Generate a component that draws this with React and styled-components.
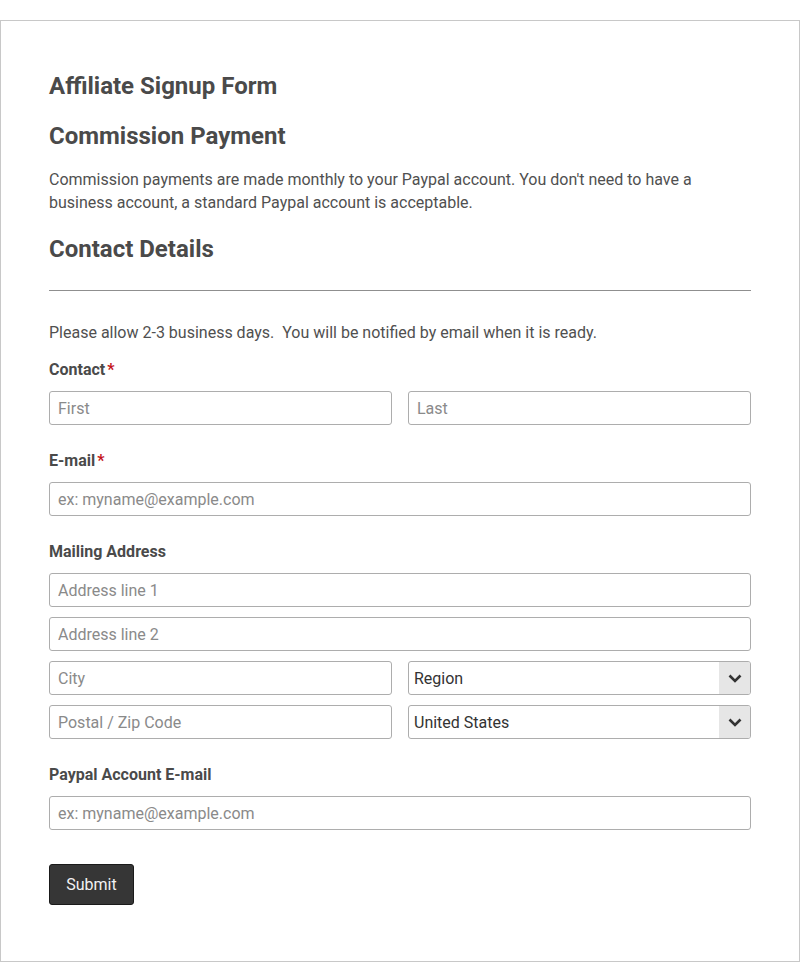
import styled, { createGlobalStyle } from 'styled-components';

const GlobalStyle = createGlobalStyle`
  body {
    margin: 0;
    padding-top: 20px;
    background: #fff;
    font-family: Roboto, "Liberation Sans", sans-serif;
    color: #4f4f4f;
  }
  * { box-sizing: border-box; }
`;

const Wrapper = styled.div`
  width: 800px;
  min-height: 942px;
  border: 1px solid #c8c8c8;
  padding: 51px 48px 40px;
`;

const Title = styled.h1`
  margin: 0 0 21px;
  font-size: 24px;
  line-height: 29px;
  font-weight: 700;
  color: #4a4a4a;
`;

const Section = styled.h2`
  margin: ${p => p.$top || 0}px 0 0;
  font-size: 24px;
  line-height: 29px;
  font-weight: 700;
  color: #4a4a4a;
`;

const Text = styled.p`
  margin: ${p => p.$top || 0}px 0 0;
  font-size: 16px;
  line-height: 23px;
  color: #505050;
`;

const Rule = styled.hr`
  margin: 26px 0 0;
  border: 0;
  border-top: 1px solid #8f8f8f;
`;

const Field = styled.div`
  margin-top: ${p => p.$top || 24}px;
  display: flex;
  flex-direction: column;
`;

const Label = styled.label`
  font-size: 16px;
  line-height: 23px;
  font-weight: 700;
  color: #4a4a4a;
  margin-bottom: 10px;
`;

const Star = styled.span`
  color: #c4161c;
  margin-left: 2px;
`;

const Row = styled.div`
  display: grid;
  grid-template-columns: 1fr 1fr;
  gap: 16px;
`;

const Stack = styled.div`
  display: flex;
  flex-direction: column;
  gap: 10px;
`;

const Input = styled.input`
  width: 100%;
  height: 34px;
  border: 1px solid #adadad;
  border-radius: 3px;
  padding: 0 8px;
  font-family: Roboto, "Liberation Sans", sans-serif;
  font-size: 16px;
  color: #333;
  background: #fff;
  &::placeholder { color: #8a8a8a; }
`;

const SelectBox = styled.div`
  display: flex;
  height: 34px;
  border: 1px solid #adadad;
  border-radius: 3px;
  overflow: hidden;
`;

const SelectValue = styled.div`
  flex: 1;
  display: flex;
  align-items: center;
  padding-left: 5px;
  font-size: 16px;
  color: #333;
`;

const Arrow = styled.div`
  width: 31px;
  display: flex;
  align-items: center;
  justify-content: center;
  background: #e6e6e6;
`;

const SubmitButton = styled.button`
  margin-top: 34px;
  width: 85px;
  height: 41px;
  background: #363636;
  color: #f2f2f2;
  border: 1px solid #1a1a1a;
  border-radius: 3px;
  font-family: Roboto, "Liberation Sans", sans-serif;
  font-size: 16px;
`;

const Select = ({ value }) => (
  <SelectBox>
    <SelectValue>{value}</SelectValue>
    <Arrow>
      <svg width="14" height="9" viewBox="0 0 14 9">
        <polyline points="1.5,1.5 7,7 12.5,1.5" fill="none" stroke="#333" strokeWidth="2.6" />
      </svg>
    </Arrow>
  </SelectBox>
);

const App = () => (
  <>
    <GlobalStyle />
    <Wrapper>
      <Title>Affiliate Signup Form</Title>
      <Section>Commission Payment</Section>
      <Text $top={17}>
        Commission payments are made monthly to your Paypal account. You don't need to have a
        business account, a standard Paypal account is acceptable.
      </Text>
      <Section $top={21}>Contact Details</Section>
      <Rule />
      <Text $top={30}>Please allow 2-3 business days.&nbsp; You will be notified by email when it is ready.</Text>

      <Field $top={14}>
        <Label>Contact<Star>*</Star></Label>
        <Row>
          <Input placeholder="First" />
          <Input placeholder="Last" />
        </Row>
      </Field>

      <Field>
        <Label>E-mail<Star>*</Star></Label>
        <Input placeholder="ex: myname@example.com" />
      </Field>

      <Field>
        <Label>Mailing Address</Label>
        <Stack>
          <Input placeholder="Address line 1" />
          <Input placeholder="Address line 2" />
          <Row>
            <Input placeholder="City" />
            <Select value="Region" />
          </Row>
          <Row>
            <Input placeholder="Postal / Zip Code" />
            <Select value="United States" />
          </Row>
        </Stack>
      </Field>

      <Field>
        <Label>Paypal Account E-mail</Label>
        <Input placeholder="ex: myname@example.com" />
      </Field>

      <SubmitButton>Submit</SubmitButton>
    </Wrapper>
  </>
);

export default App;
